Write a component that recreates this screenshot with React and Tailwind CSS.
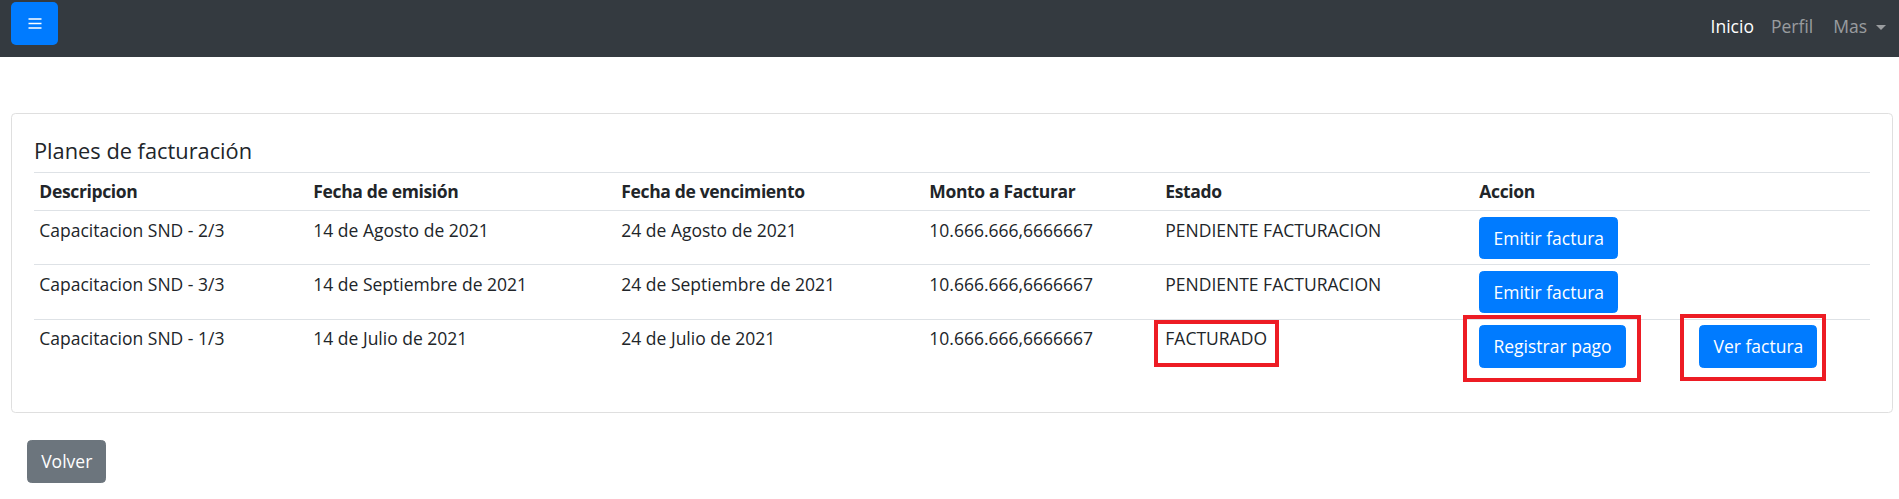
const planes = [
  { id: 1, desc: 'Capacitacion SND - 2/3', emision: '14 de Agosto de 2021', venc: '24 de Agosto de 2021', monto: '10.666.666,6666667', estado: 'PENDIENTE FACTURACION' },
  { id: 2, desc: 'Capacitacion SND - 3/3', emision: '14 de Septiembre de 2021', venc: '24 de Septiembre de 2021', monto: '10.666.666,6666667', estado: 'PENDIENTE FACTURACION' },
  { id: 3, desc: 'Capacitacion SND - 1/3', emision: '14 de Julio de 2021', venc: '24 de Julio de 2021', monto: '10.666.666,6666667', estado: 'FACTURADO' },
]

function Btn({ children, gray }) {
  return (
    <button
      className={
        'rounded-[4.4px] border px-[13.2px] py-[7px] leading-[26.4px] text-white ' +
        (gray ? 'border-[#6c757d] bg-[#6c757d]' : 'border-[#007bff] bg-[#007bff]')
      }
    >
      {children}
    </button>
  )
}

function Marked({ className }) {
  return <span className={'pointer-events-none absolute border-[4px] border-[#ed1c24] ' + className} />
}

export default function App() {
  return (
    <div className="min-h-[499px] bg-white font-['Open_Sans',sans-serif] text-[17.5px] leading-[26.4px] text-[#212529]">
      <nav className="flex h-[57px] items-center justify-between bg-[#343a40] pl-[11px] pr-[13px]">
        <button className="flex h-[43px] w-[47px] items-center justify-center rounded-[5px] bg-[#007bff] mb-[6px] mt-[-4px]">
          <svg width="14" height="11" viewBox="0 0 14 11">
            <path d="M0.5 1h13M0.5 5.5h13M0.5 10h13" stroke="#fff" strokeWidth="1.3" />
          </svg>
        </button>
        <ul className="flex items-center pb-[4px]">
          <li className="mr-[17px] text-white">Inicio</li>
          <li className="mr-[20px] text-white/50">Perfil</li>
          <li className="flex items-center text-white/50">
            Mas
            <span className="ml-[9px] mt-[2px] h-0 w-0 border-x-[5px] border-t-[5.5px] border-x-transparent border-t-white/50" />
          </li>
        </ul>
      </nav>

      <main className="pl-[11px] pr-[6px] pt-[56px]">
        <section className="rounded-[4.4px] border border-[#dfdfdf] px-[22px] pb-[39px] pt-[24px]">
          <h5 className="mb-[8px] text-[21.8px] leading-[26px]">Planes de facturación</h5>
          <table className="w-full border-collapse text-left">
            <thead>
              <tr className="border-y border-[#dee2e6] tracking-[-0.35px]">
                <th className="w-[274px] px-[5.3px] py-[5.3px] font-bold">Descripcion</th>
                <th className="w-[308px] px-[5.3px] py-[5.3px] font-bold">Fecha de emisión</th>
                <th className="w-[308px] px-[5.3px] py-[5.3px] font-bold">Fecha de vencimiento</th>
                <th className="w-[236px] px-[5.3px] py-[5.3px] font-bold">Monto a Facturar</th>
                <th className="w-[314px] px-[5.3px] py-[5.3px] font-bold">Estado</th>
                <th className="w-[220px] px-[5.3px] py-[5.3px] font-bold">Accion</th>
                <th className="px-[5.3px] py-[5.3px]"></th>
              </tr>
            </thead>
            <tbody>
              {planes.map((p, i) => {
                const last = i === planes.length - 1
                return (
                  <tr key={p.id} className={last ? '' : 'border-b border-[#dee2e6]'}>
                    <td className="px-[5.3px] py-[5.5px] align-top">{p.desc}</td>
                    <td className="px-[5.3px] py-[5.5px] align-top">{p.emision}</td>
                    <td className="px-[5.3px] py-[5.5px] align-top">{p.venc}</td>
                    <td className="px-[5.3px] py-[5.5px] align-top">{p.monto}</td>
                    <td className="relative px-[5.3px] py-[5.5px] align-top">
                      {last && <Marked className="left-[-6px] top-0 h-[47px] w-[125px]" />}
                      {p.estado}
                    </td>
                    <td className="relative px-[5.3px] py-[5.5px] align-top">
                      {last ? (
                        <>
                          <Marked className="left-[-11px] top-[-5px] h-[67px] w-[178px]" />
                          <Btn>Registrar pago</Btn>
                        </>
                      ) : (
                        <Btn>Emitir factura</Btn>
                      )}
                    </td>
                    <td className="relative px-[5.3px] py-[5.5px] align-top">
                      {last && (
                        <>
                          <Marked className="left-[-14px] top-[-6px] h-[67px] w-[146px]" />
                          <Btn>Ver factura</Btn>
                        </>
                      )}
                    </td>
                  </tr>
                )
              })}
            </tbody>
          </table>
        </section>

        <div className="pl-[16px] pt-[27px]">
          <Btn gray>Volver</Btn>
        </div>
      </main>
    </div>
  )
}
